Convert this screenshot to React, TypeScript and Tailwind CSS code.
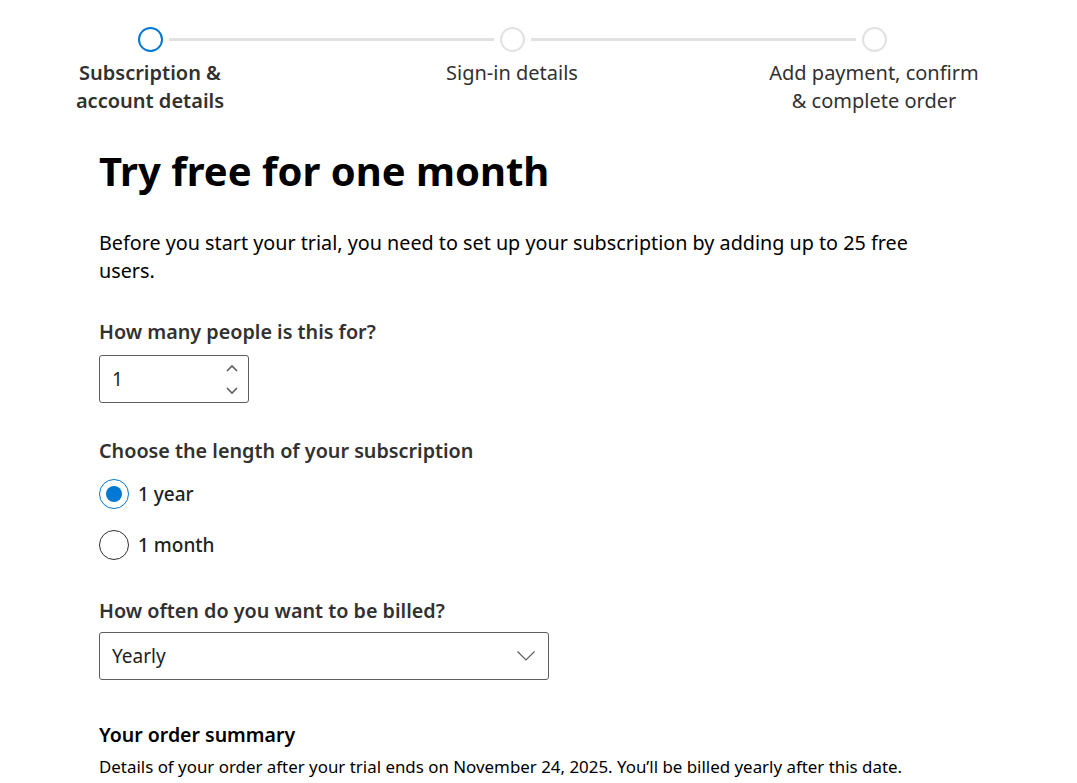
import React, { useState } from 'react';

const font = { fontFamily: '"Noto Sans", "Open Sans", sans-serif' };

const steps = [
    { label: ['Subscription &', 'account details'], active: true },
    { label: ['Sign-in details'], active: false },
    { label: ['Add payment, confirm', '& complete order'], active: false },
];

const Stepper: React.FC = () => (
    <div className="pt-[27px]">
        <div className="flex items-center pl-[138px]">
            {steps.map((s, i) => (
                <React.Fragment key={i}>
                    <div
                        className={`w-[25px] h-[25px] rounded-full border-[2.5px] ${
                            s.active ? 'border-[#0078d4]' : 'border-[#e1e1e1]'
                        }`}
                    />
                    {i < steps.length - 1 && <div className="w-[325px] h-[3px] mx-[6px] bg-[#e1e1e1]" />}
                </React.Fragment>
            ))}
        </div>
        <div className="flex pl-[30px] gap-[122px] mt-[7px]">
            {steps.map((s, i) => (
                <div
                    key={i}
                    className={`w-[240px] text-center text-[20px] leading-[28px] text-[#323130] ${
                        s.active ? 'font-semibold' : ''
                    }`}
                >
                    {s.label.map((l) => (
                        <div key={l}>{l}</div>
                    ))}
                </div>
            ))}
        </div>
    </div>
);

const Radio: React.FC<{ checked: boolean; label: string; onClick: () => void }> = ({ checked, label, onClick }) => (
    <button onClick={onClick} className="flex items-center gap-[9px] h-[30px]">
        <span
            className={`w-[30px] h-[30px] rounded-full border flex items-center justify-center ${
                checked ? 'border-[#0078d4]' : 'border-[#323130]'
            }`}
        >
            {checked && <span className="w-[16px] h-[16px] rounded-full bg-[#0078d4]" />}
        </span>
        <span className="text-[19px] font-medium text-[#201f1e]">{label}</span>
    </button>
);

export default function App() {
    const [term, setTerm] = useState<'year' | 'month'>('year');

    return (
        <div className="min-h-screen bg-white text-[#201f1e]" style={font}>
            <Stepper />

            <div className="pl-[99px] w-[960px]">
                <h1 className="mt-[30px] text-[40px] leading-[52px] font-bold text-black">Try free for one month</h1>

                <p className="mt-[32px] text-[19.75px] leading-[28px] text-black max-w-[830px]">
                    Before you start your trial, you need to set up your subscription by adding up to 25 free users.
                </p>

                <div className="mt-[33px] text-[19.75px] leading-[28px] font-semibold text-[#323130]">How many people is this for?</div>
                <div className="mt-[9px] w-[150px] h-[48px] border border-[#605e5c] rounded-[3px] flex items-center justify-between pl-[12px] pr-[9px]">
                    <span className="text-[19px] text-[#201f1e]">1</span>
                    <div className="flex flex-col gap-[13px] text-[#605e5c]">
                        <svg width="14" height="9" viewBox="0 0 14 9" fill="none" stroke="currentColor" strokeWidth="1.6">
                            <path d="M2 7 L7 2 L12 7" />
                        </svg>
                        <svg width="14" height="9" viewBox="0 0 14 9" fill="none" stroke="currentColor" strokeWidth="1.6">
                            <path d="M2 2 L7 7 L12 2" />
                        </svg>
                    </div>
                </div>

                <div className="mt-[34px] text-[19.75px] leading-[28px] font-semibold text-[#323130]">
                    Choose the length of your subscription
                </div>
                <div className="mt-[14px] flex flex-col gap-[21px]">
                    <Radio checked={term === 'year'} label="1 year" onClick={() => setTerm('year')} />
                    <Radio checked={term === 'month'} label="1 month" onClick={() => setTerm('month')} />
                </div>

                <div className="mt-[37px] text-[19.75px] leading-[28px] font-semibold text-[#323130]">How often do you want to be billed?</div>
                <div className="mt-[7px] w-[450px] h-[48px] border border-[#605e5c] rounded-[3px] flex items-center justify-between pl-[12px] pr-[12px]">
                    <span className="text-[19px] text-[#201f1e]">Yearly</span>
                    <svg width="20" height="12" viewBox="0 0 20 12" fill="none" stroke="#605e5c" strokeWidth="1.2">
                        <path d="M1.5 1.5 L10 10 L18.5 1.5" />
                    </svg>
                </div>

                <div className="mt-[41px] text-[19.5px] leading-[28px] font-semibold text-black">Your order summary</div>
                <p className="mt-[6px] text-[16.9px] leading-[24px] text-black">
                    Details of your order after your trial ends on November 24, 2025. You’ll be billed yearly after this date.
                </p>
            </div>
        </div>
    );
}
